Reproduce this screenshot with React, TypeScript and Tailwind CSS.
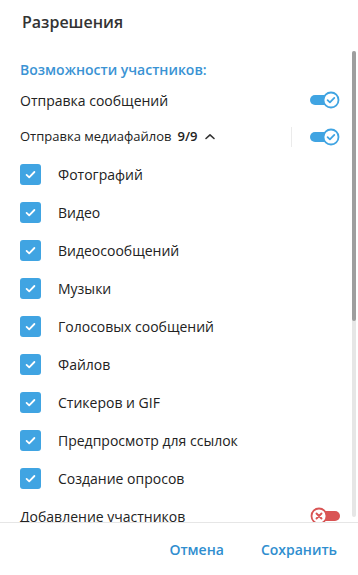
import React from "react";

const items = [
	"Фотографий",
	"Видео",
	"Видеосообщений",
	"Музыки",
	"Голосовых сообщений",
	"Файлов",
	"Стикеров и GIF",
	"Предпросмотр для ссылок",
	"Создание опросов",
];

function ToggleOn() {
	return (
		<svg width="30" height="18" viewBox="0 0 30 18">
			<rect x="0" y="4" width="24" height="10" rx="5" fill="#40a4e2" />
			<circle cx="21" cy="9" r="7.5" fill="#fff" stroke="#40a4e2" strokeWidth="1.8" />
			<path d="M17.6 9.2 L19.9 11.4 L24.3 6.9" fill="none" stroke="#40a4e2" strokeWidth="1.8" strokeLinecap="round" strokeLinejoin="round" />
		</svg>
	);
}

function ToggleOff() {
	return (
		<svg width="30" height="18" viewBox="0 0 30 18">
			<rect x="6" y="4" width="24" height="10" rx="5" fill="#d95454" />
			<circle cx="9" cy="9" r="7.5" fill="#fff" stroke="#d95454" strokeWidth="1.8" />
			<path d="M6.5 6.5 L11.5 11.5 M11.5 6.5 L6.5 11.5" fill="none" stroke="#d95454" strokeWidth="1.9" strokeLinecap="round" />
		</svg>
	);
}

function Check() {
	return (
		<div className="w-[21px] h-[21px] rounded-[3px] bg-[#40a4e2] flex items-center justify-center shrink-0">
			<svg width="13" height="13" viewBox="0 0 13 13">
				<path d="M2.6 6.9 L5.2 9.3 L10.4 4" fill="none" stroke="#fff" strokeWidth="1.8" strokeLinecap="round" strokeLinejoin="round" />
			</svg>
		</div>
	);
}

export default function App() {
	return (
		<div className="w-[358px] h-[575px] bg-white flex flex-col overflow-hidden font-['Open_Sans',sans-serif] text-[#222]">
			<div className="h-[50px] shrink-0 pl-[22px] pt-[10px]">
				<p className="text-[16px] leading-[24px] font-semibold text-[#333]">Разрешения</p>
			</div>

			<div className="flex-1 relative overflow-hidden">
				<div className="pl-[20px] pr-[18px]">
					<p className="mt-[9px] h-[22px] leading-[22px] text-[14px] font-semibold text-[#3a93d4]">Возможности участников:</p>
					<div className="h-[38px] flex items-center justify-between">
						<span className="text-[14px]">Отправка сообщений</span>
						<ToggleOn />
					</div>
					<div className="h-[36px] flex items-center">
						<span className="text-[13px]">Отправка медиафайлов</span>
						<span className="text-[13px] font-semibold ml-[6px]">9/9</span>
						<svg width="12" height="12" viewBox="0 0 12 12" className="ml-[6px]">
							<path d="M2 7.5 L6 3.8 L10 7.5" fill="none" stroke="#333" strokeWidth="1.6" strokeLinecap="round" strokeLinejoin="round" />
						</svg>
						<div className="flex-1" />
						<div className="w-px h-[20px] bg-[#ebebeb] mr-[18px]" />
						<ToggleOn />
					</div>
					{items.map((t) => (
						<div key={t} className="h-[38px] flex items-center gap-[17px]">
							<Check />
							<span className="text-[14px]">{t}</span>
						</div>
					))}
					<div className="h-[38px] flex items-center justify-between">
						<span className="text-[14px]">Добавление участников</span>
						<ToggleOff />
					</div>
				</div>
				<div className="absolute right-[2px] top-px bottom-[5px] w-[4px] rounded-full bg-[#e6e6e6]">
					<div className="h-[270px] w-full rounded-full bg-[#9e9e9e]" />
				</div>
			</div>

			<div className="h-[53px] shrink-0 border-t border-[#e6e6e6] flex items-center justify-end gap-[37px] pr-[21px]">
				<button className="text-[14px] font-semibold text-[#2f8ecf]">Отмена</button>
				<button className="text-[14px] font-semibold text-[#2f8ecf]">Сохранить</button>
			</div>
		</div>
	);
}
